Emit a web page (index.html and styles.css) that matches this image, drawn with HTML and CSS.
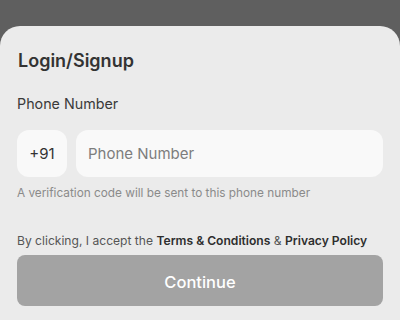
FILE: index.html
```html
<!DOCTYPE html>
<html>
<head>
<meta charset="utf-8">
<link rel="stylesheet" href="styles.css">
</head>
<body>
<div class="backdrop"></div>
<div class="sheet">
  <h1 class="title">Login/Signup</h1>
  <div class="label">Phone Number</div>
  <div class="phone-row">
    <div class="code">+91</div>
    <div class="input">Phone Number</div>
  </div>
  <div class="hint">A verification code will be sent to this phone number</div>
  <div class="terms">By clicking, I accept the <b>Terms &amp; Conditions</b> &amp; <b>Privacy Policy</b></div>
  <button class="continue">Continue</button>
</div>
</body>
</html>
```
FILE: styles.css
```css
html, body {
  margin: 0;
  padding: 0;
  height: 320px;
  overflow: hidden;
}
body {
  background: #5f5f5f;
  font-family: Inter, "Liberation Sans", sans-serif;
  display: flex;
  flex-direction: column;
}
.backdrop {
  height: 26px;
  flex: none;
}
.sheet {
  flex: 1;
  background: #ebebeb;
  border-radius: 20px 20px 0 0;
  padding: 0 17px;
  display: flex;
  flex-direction: column;
}
.title {
  margin: 24px 0 0 1px;
  font-size: 18px;
  line-height: 22px;
  font-weight: 600;
  color: #333;
}
.label {
  margin-top: 23px;
  font-size: 14.3px;
  line-height: 18px;
  color: #3a3a3a;
}
.phone-row {
  margin-top: 17px;
  display: flex;
  gap: 9px;
  height: 47px;
}
.code, .input {
  background: #f9f9f9;
  border-radius: 12px;
  display: flex;
  align-items: center;
  font-size: 15px;
}
.code {
  width: 50px;
  justify-content: center;
  color: #333;
}
.input {
  flex: 1;
  padding-left: 12px;
  color: #7d7d7d;
}
.hint {
  margin-top: 8px;
  font-size: 11.8px;
  line-height: 16px;
  color: #8a8a8a;
}
.terms {
  margin-top: 32px;
  font-size: 12.1px;
  line-height: 16px;
  color: #555;
}
.terms b {
  font-weight: 600;
  color: #2e2e2e;
}
.continue {
  margin-top: 6px;
  height: 51px;
  border: none;
  border-radius: 8px;
  background: #a3a3a3;
  color: #fff;
  font-family: inherit;
  font-size: 16.5px;
  font-weight: 500;
  padding-top: 3px;
}
```
